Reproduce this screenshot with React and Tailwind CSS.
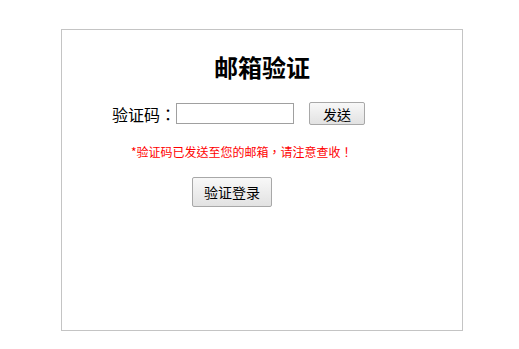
export default function App() {
  return (
    <div className="w-[519px] h-[349px] bg-white overflow-hidden font-['Noto_Sans_CJK_TC','Noto_Sans_CJK_SC',sans-serif] text-black">
      <div className="ml-[61px] mt-[29px] w-[402px] h-[302px] border border-[#c4c4c4] flex flex-col">
        <h1 className="mt-[20px] text-center text-[24px] leading-[34px] font-bold">邮箱验证</h1>
        <div className="mt-[18px] ml-[50px] flex items-center">
          <span className="text-[16px] leading-[22px]">验证码：</span>
          <input className="w-[118px] h-[21px] border border-[#a0a0a0] outline-none px-1 text-[13px]" />
          <button className="ml-[15px] w-[56px] h-[23px] border border-[#a8a8a8] rounded-[2px] bg-gradient-to-b from-[#f8f8f8] to-[#e2e2e2] text-[14px] leading-[20px]">
            发送
          </button>
        </div>
        <p className="mt-[19px] ml-[69px] text-[12px] leading-[16px] text-[#f00]">*验证码已发送至您的邮箱，请注意查收！</p>
        <button className="mt-[17px] ml-[130px] w-[80px] h-[30px] border border-[#a8a8a8] rounded-[2px] bg-gradient-to-b from-[#f8f8f8] to-[#e2e2e2] text-[14px] leading-[20px]">
          验证登录
        </button>
      </div>
    </div>
  );
}
